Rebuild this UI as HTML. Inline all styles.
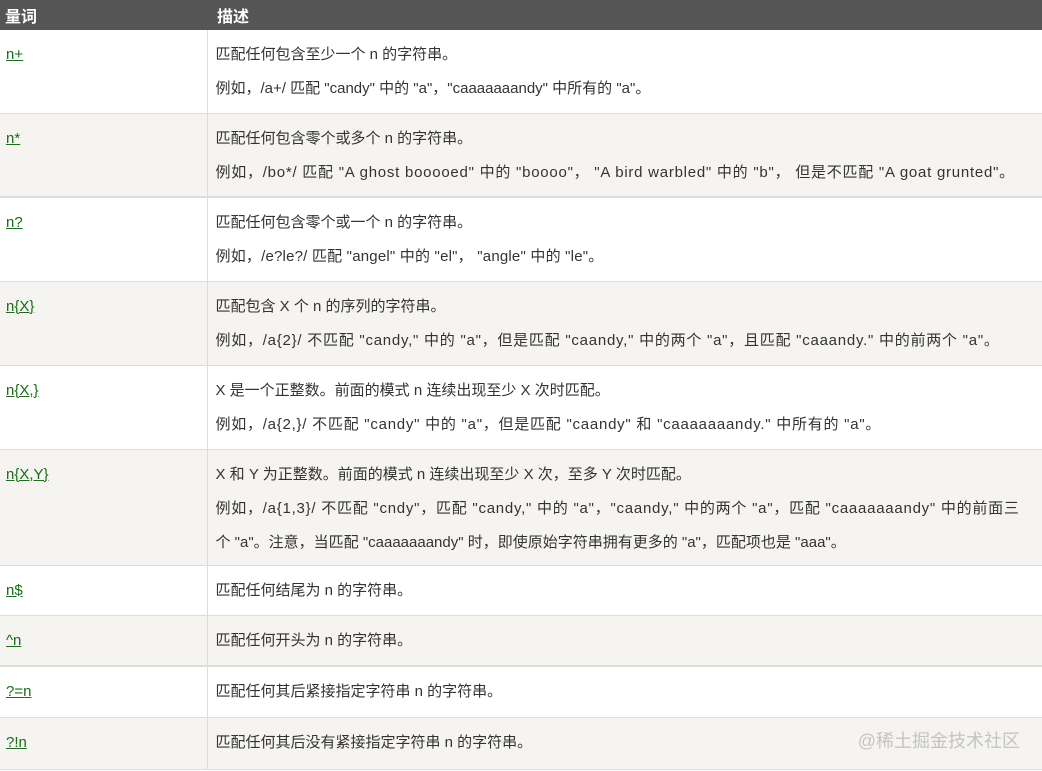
<!DOCTYPE html>
<html><head><meta charset="utf-8"><style>
body{margin:0;width:1042px;height:771px;overflow:hidden;background:#fff;font-family:"Liberation Sans","Noto Sans CJK SC",sans-serif;font-size:15px;color:#333}
table{border-collapse:collapse;width:1042px;table-layout:fixed}
th{background:#555;color:#fff;text-align:left;font-weight:bold;height:30px;padding:0 0 0 5px;font-size:16px}
td{vertical-align:top;border-bottom:1px solid #ddd;padding:8px 0 0 6px;line-height:34px;white-space:nowrap}
td:first-child{border-right:1px solid #ddd}
td:last-child{padding-left:8px}
tr:nth-child(odd) td{background:#f6f4f0}
a{color:#1a6b1a;text-decoration:underline}
.ls{letter-spacing:0.75px}
.wm{position:absolute;right:22px;top:727px;color:#c4c4c4;font-size:18px}
</style></head><body>
<table>
<colgroup><col style="width:207px"><col></colgroup>
<tr><th>量词</th><th style="padding-left:10px">描述</th></tr>
<tr style="height:83px"><td><a>n+</a></td><td>匹配任何包含至少一个 n 的字符串。<br>例如，/a+/ 匹配 "candy" 中的 "a"，"caaaaaaandy" 中所有的 "a"。</td></tr>
<tr style="height:84px"><td style="border-bottom:2px solid #ddd"><a>n*</a></td><td style="border-bottom:2px solid #ddd">匹配任何包含零个或多个 n 的字符串。<br><span class="ls">例如，/bo*/ 匹配 "A ghost booooed" 中的 "boooo"， "A bird warbled" 中的 "b"， 但是不匹配 "A goat grunted"。</span></td></tr>
<tr style="height:84px"><td><a>n?</a></td><td>匹配任何包含零个或一个 n 的字符串。<br><span style="letter-spacing:0.2px">例如，/e?le?/ 匹配 "angel" 中的 "el"， "angle" 中的 "le"。</span></td></tr>
<tr style="height:84px"><td><a>n{X}</a></td><td>匹配包含 X 个 n 的序列的字符串。<br><span class="ls">例如，/a{2}/ 不匹配 "candy," 中的 "a"，但是匹配 "caandy," 中的两个 "a"，且匹配 "caaandy." 中的前两个 "a"。</span></td></tr>
<tr style="height:84px"><td><a>n{X,}</a></td><td>X 是一个正整数。前面的模式 n 连续出现至少 X 次时匹配。<br><span class="ls">例如，/a{2,}/ 不匹配 "candy" 中的 "a"，但是匹配 "caandy" 和 "caaaaaaandy." 中所有的 "a"。</span></td></tr>
<tr style="height:116px"><td><a>n{X,Y}</a></td><td>X 和 Y 为正整数。前面的模式 n 连续出现至少 X 次，至多 Y 次时匹配。<br><span class="ls">例如，/a{1,3}/ 不匹配 "cndy"，匹配 "candy," 中的 "a"，"caandy," 中的两个 "a"，匹配 "caaaaaaandy" 中的前面三</span><br>个 "a"。注意，当匹配 "caaaaaaandy" 时，即使原始字符串拥有更多的 "a"，匹配项也是 "aaa"。</td></tr>
<tr style="height:50px"><td><a>n$</a></td><td>匹配任何结尾为 n 的字符串。</td></tr>
<tr style="height:51px"><td style="border-bottom:2px solid #ddd"><a>^n</a></td><td style="border-bottom:2px solid #ddd">匹配任何开头为 n 的字符串。</td></tr>
<tr style="height:51px"><td><a>?=n</a></td><td>匹配任何其后紧接指定字符串 n 的字符串。</td></tr>
<tr style="height:52px"><td><a>?!n</a></td><td>匹配任何其后没有紧接指定字符串 n 的字符串。</td></tr>
</table>
<div class="wm">@稀土掘金技术社区</div>
</body></html>
